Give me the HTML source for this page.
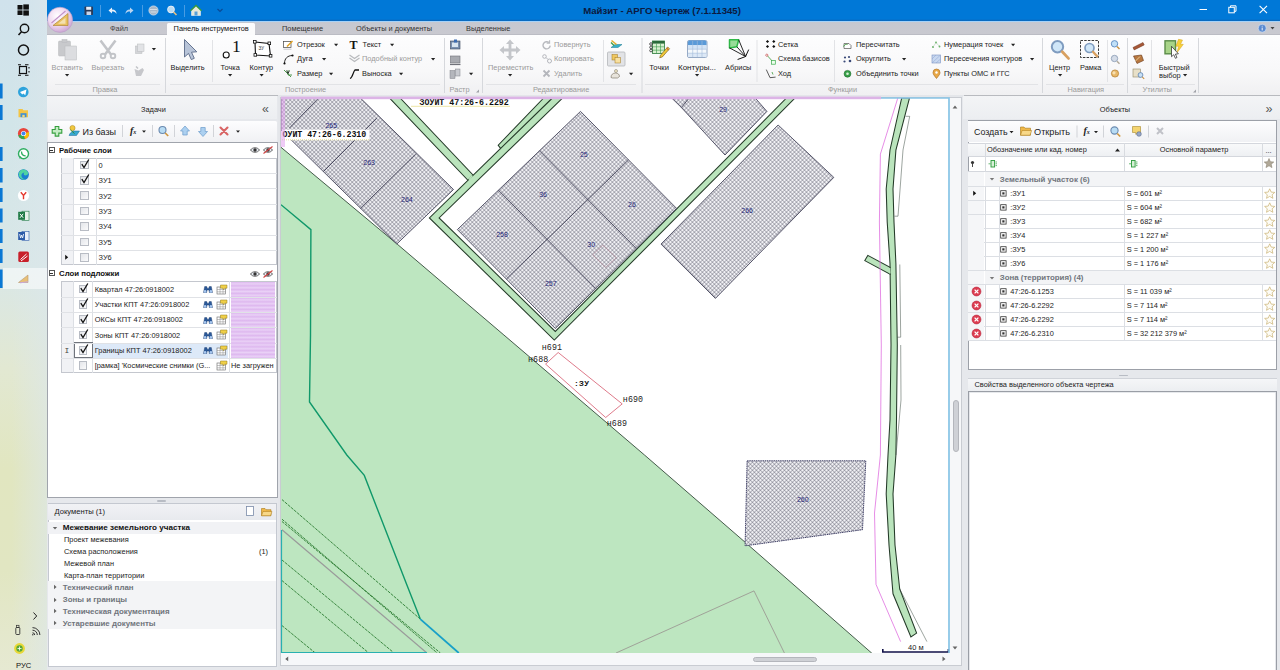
<!DOCTYPE html>
<html lang="ru"><head><meta charset="utf-8"><title>Майзит - АРГО Чертеж</title>
<style>
html,body{margin:0;padding:0}
body{width:1280px;height:670px;position:relative;overflow:hidden;background:#e9eaec;font-family:"Liberation Sans",sans-serif;font-size:7.4px;color:#222;line-height:1}
.a{position:absolute}
.t{position:absolute;white-space:nowrap;line-height:10px;height:10px;margin-top:-5px}
.b{font-weight:bold}
.g{color:#9a9a9a}
svg{position:absolute;overflow:visible}

</style></head>
<body>
<!-- TASKBAR -->
<div class="a" id="tb" style="left:0;top:0;width:47px;height:670px;background:linear-gradient(180deg,#d0e2ec 0%,#d2e5e9 18%,#d9e7e7 40%,#e2e8d2 55%,#e1e6c0 70%,#e1e6c2 85%,#e6e9d2 100%)"></div>
<div class="a" style="left:0;top:0;width:47px;height:670px;background:linear-gradient(90deg,rgba(222,232,236,0) 25%,rgba(220,231,236,0.600) 100%)"></div>
<div class="a" style="left:3px;top:268px;width:44px;height:21px;background:rgba(255,255,255,0.55)"></div>
<svg style="left:0;top:0" width="47" height="670">
<g fill="#0a78d4">
<rect x="0" y="83.5" width="2.6" height="15"/><rect x="0" y="105" width="2.6" height="15"/>
<rect x="0" y="147" width="2.6" height="14"/><rect x="0" y="168" width="2.6" height="14.5"/>
<rect x="0" y="188" width="2.6" height="14"/><rect x="0" y="208.5" width="2.6" height="14"/>
<rect x="0" y="229" width="2.6" height="14"/><rect x="0" y="249" width="2.6" height="14"/>
<rect x="0" y="269.5" width="2.6" height="18.5"/>
</g>
<!-- windows logo -->
<g fill="#111"><rect x="17.5" y="5" width="5" height="4.6"/><rect x="23.3" y="4.4" width="5.6" height="5.2"/><rect x="17.5" y="10.4" width="5" height="4.6"/><rect x="23.3" y="10.4" width="5.6" height="5.2"/></g>
<!-- search -->
<circle cx="24.5" cy="28.5" r="4.2" fill="none" stroke="#111" stroke-width="1.4"/><path d="M21.5,31.8L18.5,35" stroke="#111" stroke-width="1.6"/>
<!-- cortana -->
<circle cx="23.5" cy="50" r="5" fill="none" stroke="#111" stroke-width="1.5"/>
<!-- task view -->
<rect x="19.5" y="66.5" width="7" height="7" fill="none" stroke="#111" stroke-width="1.2"/><path d="M18,64.8h3M18,75.2h3M25,64.8h3.5M25,75.2h3.5M29,67v1.5M29,71v1.5" stroke="#111" stroke-width="1.1"/>
<!-- telegram -->
<circle cx="23.3" cy="92" r="5.3" fill="#2ea3dc"/><path d="M20,92l6.5,-2.6l-1.2,5.8l-2,-1.6l-1,1z" fill="#fff"/>
<!-- explorer -->
<path d="M18.5,109h4l1,1.2h4.5v7h-9.5z" fill="#f4c545"/><rect x="20.5" y="113.2" width="6" height="4" fill="#3d8fd6"/><rect x="22.3" y="114.8" width="2.4" height="2.4" fill="#f7d774"/>
<!-- chrome -->
<circle cx="23.5" cy="133.5" r="5.6" fill="#e8453c"/><path d="M23.5,133.5L18.2,135.5A5.6,5.6 0 0 0 25,138.9z" fill="#34a853"/><path d="M23.5,133.5L25,138.9A5.6,5.6 0 0 0 28.9,132z" fill="#fbbc05"/><circle cx="23.5" cy="133.5" r="2.6" fill="#fff"/><circle cx="23.5" cy="133.5" r="2" fill="#4285f4"/>
<!-- whatsapp -->
<circle cx="23.5" cy="153.8" r="5" fill="#fff" stroke="#2fae60" stroke-width="1.4"/><path d="M19.2,158.8l1,-2.8l1.6,1.4z" fill="#2fae60"/><path d="M21.5,151.5c0,2.5 1.8,4.3 4.2,4.3" fill="none" stroke="#2fae60" stroke-width="1.3"/>
<!-- edge -->
<circle cx="23.5" cy="174.6" r="5.4" fill="#1b7fd0"/><path d="M19,176a4.8,4.8 0 0 1 9,-3.4c0.6,1.6 -0.6,2.8 -2.4,2.8c-2.4,0 -2.2,-2.2 -1,-2.6c-2.6,-0.4 -4,2.2 -2.6,4.6c1,1.6 3,2.2 4.8,1.6a5.4,5.4 0 0 1 -7.8,-3z" fill="#4fd4a0"/>
<!-- yandex -->
<circle cx="23.5" cy="195.5" r="5.6" fill="#fff"/><path d="M20.8,192.2l2.7,3.3l2.7,-3.3M23.5,195.5v3.8" stroke="#e53a2e" stroke-width="1.4" fill="none"/>
<!-- excel -->
<rect x="22" y="211.2" width="7" height="9.2" fill="#e8f2ea" stroke="#1f7a45" stroke-width="0.6"/><rect x="18.2" y="211.8" width="6.8" height="8" fill="#1f7a45"/><path d="M20,213.8l3.2,4M23.2,213.8l-3.2,4" stroke="#fff" stroke-width="1"/>
<!-- word -->
<rect x="22" y="231.4" width="7" height="9.2" fill="#e8eef8" stroke="#2b5aa8" stroke-width="0.6"/><rect x="18.2" y="232" width="6.8" height="8" fill="#2b5aa8"/><path d="M19.6,234l1,4l1,-3l1,3l1,-4" stroke="#fff" stroke-width="0.8" fill="none"/>
<!-- red app -->
<rect x="18.3" y="251.5" width="10.6" height="10.6" rx="1.5" fill="#c8202a"/><path d="M20.5,259.5l6,-5.5M21,261l6.5,-5" stroke="#fff" stroke-width="1"/>
<!-- active app -->
<path d="M18.5,282.5l9.5,-7.5v7.5z" fill="#e8c078" stroke="#b89870" stroke-width="0.6"/><path d="M20,282.8l8,-1" stroke="#c8a8d8" stroke-width="1"/>
<!-- tray -->
<path d="M33.5,612.5l3.2,3.5l-3.2,3.5" fill="none" stroke="#222" stroke-width="1"/>
<rect x="15.8" y="627.5" width="4" height="7" rx="0.8" fill="none" stroke="#333" stroke-width="0.9"/><rect x="16.6" y="625.3" width="2.4" height="2.2" fill="none" stroke="#333" stroke-width="0.7"/>
<path d="M32.500,632.800a2.200,2.200 0 0 1 2.200,2.200M32.500,630.200a4.800,4.800 0 0 1 4.800,4.800M32.500,627.600a7.400,7.400 0 0 1 7.400,7.400" fill="none" stroke="#333" stroke-width="1"/><circle cx="32.800" cy="634.800" r="0.700" fill="#333"/>
<circle cx="19.500" cy="648.500" r="5.400" fill="#e8d838"/><circle cx="19.500" cy="648.500" r="3.200" fill="#58a838"/><path d="M17.5,648.5h4M19.5,646.5v4" stroke="#fff" stroke-width="0.8"/>
</svg>
<div class="t" style="left:16px;top:666px;font-size:7.6px;color:#111">РУС</div>

<!-- TITLE BAR -->
<div class="a" style="left:47px;top:0;width:1233px;height:20.700px;background:linear-gradient(180deg,#0078d7 0,#0078d7 18.900px,#0a69be 20.700px)"></div>
<div class="a" style="left:47px;top:20.700px;width:1233px;height:1.100px;background:#a6d2f8"></div>
<div class="t b" style="left:583px;top:10.5px;font-size:9.600px;color:#0c1a40;width:158px;text-align:center">Майзит - АРГО Чертеж (7.1.11345)</div>
<!-- TAB ROW -->
<div class="a" style="left:47px;top:21.800px;width:1233px;height:13.400px;background:linear-gradient(180deg,#c6c8d0 0,#c9c9d0 90%,#bbbcc4 96%)"></div>
<div class="a" style="left:167px;top:22.5px;width:88px;height:13.5px;background:#fbfbfc;border-radius:1.5px 1.5px 0 0"></div>
<div class="t" style="left:110px;top:29px;color:#444">Файл</div>
<div class="t" style="left:173.6px;top:29px;color:#111">Панель инструментов</div>
<div class="t" style="left:282px;top:29px;color:#333">Помещение</div>
<div class="t" style="left:356px;top:29px;color:#333">Объекты и документы</div>
<div class="t" style="left:466px;top:29px;color:#333">Выделенные</div>
<!-- RIBBON -->
<div class="a" style="left:47px;top:35.200px;width:1233px;height:59.800px;background:linear-gradient(180deg,#fdfdfe 0%,#f8f8f9 60%,#f0f0f2 100%)"></div>
<div class="a" style="left:47px;top:95px;width:1233px;height:1px;background:#b8babf"></div>
<div class="a" style="left:47px;top:96px;width:1233px;height:2px;background:#e6e8ec"></div>
<svg style="left:0;top:0" width="1280" height="100">
<g stroke="#d6d8dc" stroke-width="1"><path d="M165.5,38V93M444.5,38V93M482.5,38V93M642,38V93M1042.5,38V93M1127.5,38V93M1198.5,38V93"/></g>
<g stroke="#e2e3e6" stroke-width="1"><path d="M212.500,40V82M757,40V82M603.500,40V82M1151.500,40V82M834.500,40V82M1107.500,40V82M55,84.5H160M170,84.5H440M486,84.5H636M645,84.5H1038M1046,84.5H1124M1131,84.5H1195"/></g>
<!-- app orb -->
<defs><radialGradient id="orb" cx="40%" cy="35%" r="70%"><stop offset="0" stop-color="#ffffff"/><stop offset="0.55" stop-color="#f0d8f0"/><stop offset="1" stop-color="#c8a0d0"/></radialGradient></defs>
<circle cx="60" cy="19.8" r="12.6" fill="url(#orb)" stroke="#b8a0c8" stroke-width="0.6"/>
<path d="M53,25.5L68,13.500V25.500z" fill="#e8c060" stroke="#b08838" stroke-width="0.7"/><path d="M58,23.800l7.500,-6v6z" fill="#f4e0b0"/>
<path d="M51.500,23l14,-12" stroke="#c090c8" stroke-width="1.100"/>
<!-- quick access -->
<g>
<rect x="84.5" y="6.5" width="8.5" height="8.5" rx="0.8" fill="#2a3a58"/><rect x="86.2" y="6.8" width="5" height="3" fill="#e8eef8"/><rect x="86.5" y="11.5" width="4.6" height="3.5" fill="#c8d4e8"/>
<path d="M100.5,5V17M142.5,5V17M184.5,5V17" stroke="#5aa6e6" stroke-width="0.8"/>
<path d="M108.5,10.5l3.5,-3v2c3,0 4.5,1.5 4.5,4.5c-1,-2 -2.5,-2.5 -4.5,-2.5v2z" fill="#e8f0fa"/>
<path d="M133.5,10.5l-3.5,-3v2c-3,0 -4.5,1.5 -4.5,4.5c1,-2 2.5,-2.5 4.5,-2.5v2z" fill="#b8d4f0"/>
<circle cx="153.5" cy="10.5" r="4.6" fill="#a8b8c8" stroke="#dde6f0" stroke-width="0.7"/><path d="M150,9.5h7M150.5,12h6" stroke="#e8eef4" stroke-width="0.7"/>
<circle cx="171" cy="9.5" r="3.4" fill="#b8dcf4" stroke="#e8eef6" stroke-width="1"/><path d="M173.5,12l3,3" stroke="#e8c080" stroke-width="1.6"/>
<path d="M191.5,10.5l4.5,-4.5l4.5,4.5v5h-9z" fill="#e8e8d8" stroke="#fff" stroke-width="0.5"/><path d="M190.5,10.8l5.5,-5.3l5.5,5.3" fill="none" stroke="#3a9a3a" stroke-width="1.3"/><rect x="194.5" y="11.5" width="3" height="4" fill="#58a0d8"/>
<path d="M217.5,9l2.5,2.5l2.5,-2.5" fill="none" stroke="#0a4a96" stroke-width="1.2"/>
</g>
<!-- window controls -->
<path d="M1199.500,9.500h7.500" stroke="#fff" stroke-width="1"/>
<rect x="1228.800" y="7.300" width="5.500" height="5.500" fill="none" stroke="#fff" stroke-width="1"/><path d="M1230.500,7.300v-1.500h5.500v5.500h-1.600" fill="none" stroke="#fff" stroke-width="1"/>
<path d="M1259.600,5.800l7.400,7.400M1267,5.800l-7.400,7.400" stroke="#fff" stroke-width="1.100"/>
<circle cx="1262.200" cy="28.200" r="4" fill="#5a8ad0" stroke="#e8eef8" stroke-width="0.6"/><path d="M1262.200,27.600v2.800M1262.200,25.800v0.800" stroke="#fff" stroke-width="0.9"/><path d="M1270.500,27h4l-2,2.400z" fill="#444"/>
<!-- Правка -->
<g fill="#c8c9cc" stroke="#b8babd" stroke-width="0.5"><rect x="58.5" y="41" width="12" height="15" rx="1"/><rect x="62" y="39.5" width="5" height="3"/><rect x="65" y="46" width="11.5" height="14" fill="#dcdde0"/></g>
<g stroke="#c2c4c8" fill="none"><path d="M100.500,40.500l10.500,14M115.500,40.500l-10.500,14" stroke-width="2.600"/><circle cx="103" cy="56" r="2.300" stroke-width="1.900"/><circle cx="113" cy="56" r="2.300" stroke-width="1.900"/></g>
<g fill="#d4d5d8" stroke="#b8babd" stroke-width="0.5"><rect x="135.5" y="46" width="6.5" height="7.5"/><rect x="137.5" y="44" width="6.5" height="7.5" fill="#e2e3e6"/></g>
<path d="M134.5,69l4,1.5l4,-2.5l1.5,2l-3,6h-5z" fill="#c6c7cb"/><path d="M136,66.5l2,2" stroke="#c0c2c6" stroke-width="1.4"/>
<path d="M151.8,48h4.2l-2.1,2.4z" fill="#222"/>
<path d="M65,74h4.2l-2.1,2.4z" fill="#222"/>
<!-- Выделить cursor -->
<path d="M184.5,39.5v17.5l4,-3.6l2.8,6.2l3,-1.3l-2.8,-6.1l5.3,-0.4z" fill="#b8c4d8" stroke="#5a6a88" stroke-width="0.9"/>
<!-- Точка -->
<circle cx="226.200" cy="55" r="3" fill="#fff" stroke="#111" stroke-width="1.100"/>
<!-- Контур -->
<path d="M255,42l14,1.5l1.5,12.5l-15,-1z" fill="#fff" stroke="#111" stroke-width="1.1"/><g fill="#fff" stroke="#111" stroke-width="0.8"><rect x="253.5" y="40.5" width="2.6" height="2.6"/><rect x="268" y="42" width="2.6" height="2.6"/><rect x="269.3" y="54.5" width="2.6" height="2.6"/><rect x="254" y="53.6" width="2.6" height="2.6"/></g>
<path d="M228,74h4.2l-2.1,2.4zM259.5,74h4.2l-2.1,2.4z" fill="#222"/>
<!-- small icons Построение -->
<rect x="283.5" y="41.5" width="7.5" height="6" fill="#fff" stroke="#444" stroke-width="0.7"/><path d="M287,46.5l5.5,-5.5" stroke="#e0a020" stroke-width="1.5"/><path d="M283.5,49.2h8" stroke="#b0b0b8" stroke-width="0.7"/>
<path d="M284.5,63.5c0,-5 3,-8 8,-8" fill="none" stroke="#222" stroke-width="1"/><circle cx="284.5" cy="63.5" r="1.1" fill="#111"/><circle cx="292.5" cy="55.5" r="1.1" fill="#111"/>
<path d="M284,70l7,7M288,70v5h4" fill="none" stroke="#3a8a3a" stroke-width="0.9"/><path d="M286.5,70.5l1.5,3l1.5,-3" fill="none" stroke="#111" stroke-width="0.8"/>
<path d="M334,43.8h4.2l-2.1,2.4zM322,58h4.2l-2.1,2.4zM329,72.8h4.2l-2.1,2.4zM390,43.8h4.2l-2.1,2.4zM431,58h4.2l-2.1,2.4zM399,72.8h4.2l-2.1,2.4z" fill="#222"/>
<path d="M349.5,55l5,3.5l5,-3.5M349.5,58l5,3.5l5,-3.5" fill="none" stroke="#b8babd" stroke-width="1.2"/>
<path d="M350,78.5c3,-1 3,-7 5,-8.5h4" fill="none" stroke="#111" stroke-width="1.3"/>
<!-- Растр -->
<g><rect x="450.5" y="41" width="9.5" height="8" fill="#7a90b0" stroke="#38445a" stroke-width="0.6"/><rect x="452" y="42.5" width="6" height="4.5" fill="#d8e4f0"/><path d="M454,39.5h3v3h-3z" fill="#3a6ab0"/>
<rect x="450.500" y="56" width="9.5" height="7" fill="#a8aab0" stroke="#70727a" stroke-width="0.6"/><path d="M450,64.5h10.500" stroke="#70727a" stroke-width="1.2"/>
<rect x="450" y="70.500" width="5" height="8" fill="#b4b6bc" stroke="#80828a" stroke-width="0.5"/><rect x="455.500" y="69" width="4.500" height="7" fill="#c8cad0" stroke="#80828a" stroke-width="0.5"/></g>
<path d="M469,72.800h4.200l-2.100,2.400z" fill="#222"/>
<path d="M476,92.500h3v-3z" fill="#a0a2a8"/>
<!-- Редактирование -->
<g fill="#c4c6ca"><path d="M510,39.500l4,4.500h-2.600v4.600h4.600v-2.600l4.500,4l-4.500,4v-2.600h-4.600v4.600h2.600l-4,4.500l-4,-4.500h2.600v-4.600h-4.600v2.600l-4.500,-4l4.500,-4v2.600h4.600v-4.600h-2.600z"/></g>
<path d="M508,74h4.200l-2.100,2.400z" fill="#222"/>
<path d="M550.200,45.600a3.600,3.600 0 1 1 -1.200,-3" fill="none" stroke="#b8babf" stroke-width="1.400"/><path d="M549.600,40.200v2.900h-2.900" fill="none" stroke="#b8babf" stroke-width="1.100"/>
<g fill="none" stroke="#b4b6bc" stroke-width="1"><circle cx="544.500" cy="56.500" r="1.800"/><circle cx="549.500" cy="61" r="2"/><path d="M546,57.500l2,2"/></g>
<path d="M543.500,70.500l6,6M549.500,70.500l-6,6" stroke="#b4b6bc" stroke-width="1.800"/>
<path d="M611,47.500l4,-3h7l-4,3z" fill="#38b0c8" stroke="#187890" stroke-width="0.500"/><path d="M611.500,40.500l5,4" stroke="#e0b030" stroke-width="1.600"/><path d="M611,42.500l3,3" stroke="#3a9a48" stroke-width="1.200"/>
<rect x="607.500" y="52" width="17.500" height="14" rx="1" fill="#e2e3e6" stroke="#b4b6ba" stroke-width="0.800"/><rect x="612" y="54.500" width="5.500" height="5.500" fill="#f0c860" stroke="#a07820" stroke-width="0.500"/><rect x="615" y="57.500" width="5.500" height="5.500" fill="#f8e0a0" stroke="#a07820" stroke-width="0.500"/>
<path d="M611,77.500c0,-3 2,-4.500 4.500,-4.500s4,1.500 4,3.500l-2,1.500h-5z" fill="#e8e4dc" stroke="#706858" stroke-width="0.600"/><circle cx="616" cy="71" r="1.500" fill="#f0e8c8" stroke="#706858" stroke-width="0.500"/>
<path d="M629,72.800h4.200l-2.100,2.400z" fill="#222"/>
<!-- Функции big icons -->
<g><rect x="652.500" y="41" width="12" height="12.500" fill="#d8f0d0" stroke="#2a7a3a" stroke-width="0.800"/><rect x="652.500" y="41" width="12" height="2.600" fill="#2a6a3a"/><path d="M652.500,46.800h12M652.500,50.200h12M656.500,43.600v10M660.500,43.600v10" stroke="#3a9a4a" stroke-width="0.600"/>
<g fill="none" stroke="#333" stroke-width="0.800"><circle cx="651" cy="44" r="1.300"/><circle cx="651" cy="47.300" r="1.300"/><circle cx="651" cy="50.600" r="1.300"/></g>
<path d="M660.500,55.200l7.200,-8.200l1.900,1.700l-7.200,8.200l-2.700,0.900z" fill="#f0c838" stroke="#705818" stroke-width="0.600"/><path d="M666.600,48.200l1.900,1.700" stroke="#c03030" stroke-width="1"/></g>
<g><rect x="687.500" y="40.500" width="19.500" height="17" rx="1.500" fill="#f4f8fc" stroke="#8aa0c0" stroke-width="0.900"/><path d="M688,42a1.500,1.500 0 0 1 1.500,-1.500h15.500a1.500,1.500 0 0 1 1.500,1.500v3.200h-18.500z" fill="#5a9ad8"/><rect x="688" y="45.200" width="18.500" height="4" fill="#d4e4f6"/><rect x="688" y="53.200" width="18.500" height="3.800" fill="#dce8f6"/><path d="M688,49.200h18.500M688,53.200h18.500M692.700,41v16M697.300,41v16M702,41v16" stroke="#a4bcdc" stroke-width="0.600"/></g>
<g><path d="M729.500,39.800h9.200l-1.900,6.900l-7.300,1.200z" fill="#98dc98" stroke="#30b848" stroke-width="1.500" stroke-linejoin="round"/><path d="M738.700,39.800l6.900,16.700M736.800,46.700l8.800,9.800M729.500,47.900l16.100,8.600" stroke="#111" stroke-width="0.900" fill="none"/><path d="M748.700,49.600l-3.100,6.900l-8,3" stroke="#111" stroke-width="1" fill="none"/></g>
<path d="M695,74h4.200l-2.100,2.400z" fill="#222"/>
<!-- small: Сетка etc -->
<g fill="#111"><path d="M767.500,39.900l1.600,1.600l-1.600,1.600l-1.600,-1.600zM773.800,39.900l1.600,1.600l-1.600,1.600l-1.600,-1.600zM767.500,44.900l1.600,1.600l-1.600,1.600l-1.600,-1.600zM773.800,44.900l1.600,1.600l-1.600,1.600l-1.600,-1.600z"/></g>
<path d="M767,55.300l6,6.600" stroke="#3a9a3a" stroke-width="0.800"/><circle cx="766.800" cy="55.200" r="1.100" fill="#fff" stroke="#c03030" stroke-width="0.600"/><rect x="771.500" y="60.400" width="3.800" height="3.800" fill="#f0fff0" stroke="#3aaa4a" stroke-width="0.700"/>
<path d="M766.300,69.600l3.700,8.100l5.600,-0.600" fill="none" stroke="#333" stroke-width="0.800"/><path d="M772,72l1,2.500" stroke="#3a9a3a" stroke-width="0.8"/>
<path d="M844,48.500v-5h5l2,2v3z" fill="#fff" stroke="#555" stroke-width="0.700"/><path d="M843.500,46.500c1,-2 2.500,-2.500 4,-2" fill="none" stroke="#3a9a3a" stroke-width="0.9"/>
<g fill="#3a4a78"><circle cx="845" cy="57.500" r="1.100"/><circle cx="849" cy="57" r="1.100"/><circle cx="844.500" cy="61.500" r="1.100"/><circle cx="850" cy="61" r="1.300"/></g>
<circle cx="847.500" cy="73.800" r="3.400" fill="#38a048" stroke="#186828" stroke-width="0.600"/><circle cx="847.500" cy="73.800" r="1.300" fill="#d8f0d8"/>
<path d="M902,58h4.200l-2.100,2.400zM1011,43.800h4.200l-2.100,2.400zM1030,58h4.200l-2.100,2.400z" fill="#222"/>
<g fill="#58a858"><circle cx="933" cy="47" r="0.900"/><circle cx="936" cy="42.500" r="0.900"/><circle cx="939.500" cy="46.500" r="0.900"/></g><path d="M933,47l3,-4.500l3.500,4" fill="none" stroke="#a8c8a8" stroke-width="0.500"/>
<rect x="932" y="55" width="8.500" height="8" fill="#c8d8f0" stroke="#7890c0" stroke-width="0.600"/><path d="M932,63l8.500,-8M932,59l4,-4M936,63l4.500,-4" stroke="#8aa0d0" stroke-width="0.5"/>
<path d="M936.500,78.500c-2.500,-3 -3.500,-4.500 -3.500,-6a3.500,3.500 0 0 1 7,0c0,1.500 -1,3 -3.500,6z" fill="#e8a848" stroke="#a86818" stroke-width="0.600"/><circle cx="936.500" cy="72.500" r="1.200" fill="#fff"/>
<!-- Навигация -->
<circle cx="1057.500" cy="46.800" r="5.700" fill="#cfe6f8" stroke="#7f9cc0" stroke-width="2"/><path d="M1062.300,51.800l6.200,6.600" stroke="#d8a060" stroke-width="2.800" stroke-linecap="round"/>
<rect x="1080.500" y="40.500" width="18" height="17" fill="none" stroke="#222" stroke-width="0.900" stroke-dasharray="2.500 1.200"/><circle cx="1089.500" cy="48" r="4.500" fill="#cfe6f8" stroke="#7f9cc0" stroke-width="1.700"/><path d="M1093,51.800l4.200,4.600" stroke="#d8a060" stroke-width="2.300" stroke-linecap="round"/>
<path d="M1058,74h4.200l-2.100,2.400z" fill="#222"/>
<g><circle cx="1114.500" cy="43.800" r="3.200" fill="#c0e0f8" stroke="#5a88c0" stroke-width="0.900"/><path d="M1117,46.500l2.500,2.500" stroke="#c89040" stroke-width="1.400"/><circle cx="1114.500" cy="58.500" r="3.200" fill="#d4dce8" stroke="#90a0b8" stroke-width="0.900"/><path d="M1117,61.200l2.500,2.500" stroke="#b0a898" stroke-width="1.400"/>
<circle cx="1115" cy="73.500" r="3.600" fill="#e8b868" stroke="#b07828" stroke-width="0.700"/><circle cx="1114" cy="72.800" r="1.600" fill="#f8e0b0"/></g>
<!-- Утилиты -->
<path d="M1133,47.500l10,-5l1.200,2.400l-10,5z" fill="#a85838" stroke="#683018" stroke-width="0.500"/>
<path d="M1133.500,56l8,-1l2,5.500l-6.500,3z" fill="#b87840" stroke="#683818" stroke-width="0.600"/><path d="M1135.500,61l4.500,-4.500" stroke="#f0d8a0" stroke-width="0.9"/>
<rect x="1133" y="69" width="7.500" height="8" fill="#e8e0c8" stroke="#908868" stroke-width="0.600"/><circle cx="1140.500" cy="75" r="2.400" fill="#c8e0f4" stroke="#5a80b0" stroke-width="0.800"/><path d="M1142.200,76.800l2,2" stroke="#c89040" stroke-width="1.100"/>
<rect x="1165" y="40.800" width="10.500" height="13" fill="#a8d488" stroke="#5a8c48" stroke-width="1.400"/><path d="M1178.500,39.300l4,0.800l-2,4.200h2.800l-6.300,8.400l1.600,-6.400h-2.800z" fill="#f8d038" stroke="#d0a020" stroke-width="0.500"/><path d="M1171.500,46.300v10.400l2.300,-2l1.600,3.600l1.600,-0.800l-1.600,-3.400l3,-0.300z" fill="#fff" stroke="#222" stroke-width="0.700"/>
<path d="M1183,74h4.200l-2.100,2.400z" fill="#222"/>
<path d="M1193,92.500h3v-3z" fill="#a0a2a8"/>
</svg>
<!-- ribbon labels -->
<div class="t g" style="left:51.500px;top:67.500px">Вставить</div>
<div class="t g" style="left:91.500px;top:67.500px">Вырезать</div>
<div class="t" style="left:170.500px;top:67.500px">Выделить</div>
<div class="t" style="left:220.500px;top:67.500px">Точка</div>
<div class="t" style="left:249.500px;top:67.500px">Контур</div>
<div class="t" style="left:232px;top:45.800px;font-family:'Liberation Serif',serif;font-size:17.500px;color:#111;line-height:16px;height:16px;margin-top:-8px">1</div>
<div class="t" style="left:258.500px;top:48.500px;font-size:4.500px;color:#333">ЗУ</div>
<div class="t" style="left:297px;top:44.800px">Отрезок</div>
<div class="t" style="left:297px;top:59px">Дуга</div>
<div class="t" style="left:297px;top:73.800px">Размер</div>
<div class="t" style="left:349.500px;top:44.600px;font-family:'Liberation Serif',serif;font-weight:bold;font-size:12px;color:#111">T</div>
<div class="t" style="left:362.600px;top:44.800px">Текст</div>
<div class="t g" style="left:362px;top:59px">Подобный контур</div>
<div class="t" style="left:362px;top:73.800px">Выноска</div>
<div class="t g" style="left:488px;top:67.500px">Переместить</div>
<div class="t g" style="left:554px;top:44.800px">Повернуть</div>
<div class="t g" style="left:554px;top:59px">Копировать</div>
<div class="t g" style="left:554px;top:73.800px">Удалить</div>
<div class="t" style="left:649.300px;top:67.500px;font-size:7.600px">Точки</div>
<div class="t" style="left:678px;top:67.500px;font-size:8px">Контуры...</div>
<div class="t" style="left:725px;top:67.500px">Абрисы</div>
<div class="t" style="left:778px;top:44.800px">Сетка</div>
<div class="t" style="left:778px;top:59px">Схема базисов</div>
<div class="t" style="left:778px;top:73.800px">Ход</div>
<div class="t" style="left:856px;top:44.800px">Пересчитать</div>
<div class="t" style="left:856px;top:59px">Округлить</div>
<div class="t" style="left:856px;top:73.800px">Объединить точки</div>
<div class="t" style="left:944px;top:44.800px">Нумерация точек</div>
<div class="t" style="left:944px;top:59px">Пересечения контуров</div>
<div class="t" style="left:944px;top:73.800px">Пункты ОМС и ГГС</div>
<div class="t" style="left:1049px;top:67.500px">Центр</div>
<div class="t" style="left:1080px;top:67.500px">Рамка</div>
<div class="t" style="left:1158.800px;top:68px">Быстрый</div>
<div class="t" style="left:1159px;top:76.300px">выбор</div>
<div class="t g" style="left:92.500px;top:90px">Правка</div>
<div class="t g" style="left:285px;top:90px">Построение</div>
<div class="t g" style="left:449.600px;top:90px">Растр</div>
<div class="t g" style="left:533px;top:90px">Редактирование</div>
<div class="t g" style="left:828px;top:90px">Функции</div>
<div class="t g" style="left:1067.500px;top:90px">Навигация</div>
<div class="t g" style="left:1142.500px;top:90px">Утилиты</div>

<!-- LEFT PANEL -->
<div class="a" style="left:47px;top:96.5px;width:231px;height:573.5px;background:#e6e8ec"></div>
<div class="a" style="left:47px;top:96px;width:230px;height:23px;background:linear-gradient(180deg,#f3f4f6,#eceef1)"></div>
<div class="t" style="left:141px;top:109.5px;color:#222">Задачи</div>
<div class="t" style="left:262px;top:108.5px;color:#555;font-size:12.500px">«</div>
<div class="a" style="left:48px;top:121px;width:229px;height:20.5px;background:linear-gradient(180deg,#fdfdfe,#f0f1f4);border-radius:1.5px"></div>
<svg style="left:0;top:0" width="280" height="670">
<path d="M55.2,126.5h3.6v3h3v3.600h-3v3h-3.600v-3h-3v-3.600h3z" fill="#c4ecc4" stroke="#36a03e" stroke-width="1.100"/>
<circle cx="72.5" cy="128" r="2.600" fill="#f0c840" stroke="#a88018" stroke-width="0.500"/><path d="M70,133.500l3,-2.500h6.500l-3,4.500h-7.500z" fill="#38a8d0" stroke="#1a6a98" stroke-width="0.500"/><path d="M70.500,130l4,3.500" stroke="#2a8a3a" stroke-width="1"/>
<g stroke="#c8cacf" stroke-width="0.800"><path d="M122.500,125v12M152.500,125v12M174.500,125v12M213.500,125v12"/></g>
<path d="M142,130.500h4l-2,2.300zM236,130.500h4l-2,2.300z" fill="#222"/>
<circle cx="162.500" cy="130" r="3.500" fill="#b8dcf4" stroke="#6a8ab0" stroke-width="1.100"/><path d="M165.200,133l3,3" stroke="#d09840" stroke-width="1.700"/>
<path d="M185,126l4.500,5h-2.300v4h-4.400v-4h-2.300z" fill="#acd0f0" stroke="#6c9ccc" stroke-width="0.700"/>
<path d="M203,136.500l4.500,-5h-2.300v-4h-4.400v4h-2.300z" fill="#acd0f0" stroke="#6c9ccc" stroke-width="0.700"/>
<path d="M220.500,127.500l7,7M227.500,127.500l-7,7" stroke="#d86464" stroke-width="2.100" stroke-linecap="round"/>
</svg>
<div class="t" style="left:82.5px;top:131.5px;font-size:9px;color:#222">Из базы</div>
<div class="t" style="left:130px;top:130.5px;font-family:'Liberation Serif',serif;font-style:italic;font-weight:bold;font-size:10px;color:#222">f<span style="font-size:6px">x</span></div>
<div class="a" style="left:47px;top:142px;width:230.500px;height:356px;background:#fff;border:1.100px solid #a0a4ac;box-sizing:border-box"></div>
<div class="a" style="left:48.5px;top:146.7px;width:6px;height:6px;border:0.8px solid #555;box-sizing:border-box;background:#fff"></div><div class="a" style="left:49.800px;top:149.5px;width:3.400px;height:0.900px;background:#333"></div>
<div class="t b" style="left:59px;top:150.5px;font-size:7.700px;color:#111">Рабочие слои</div>
<svg style="left:249px;top:145px" width="28" height="10"><path d="M1.500,5c2,-3 7,-3 9,0c-2,3 -7,3 -9,0z" fill="#e8ecf2" stroke="#444" stroke-width="0.800"/><circle cx="6" cy="5" r="1.700" fill="#333"/><path d="M14.500,5c2,-3 7,-3 9,0c-2,3 -7,3 -9,0z" fill="#e8ecf2" stroke="#444" stroke-width="0.800"/><circle cx="19" cy="5" r="1.700" fill="#333"/><path d="M14.500,8.500l9,-7" stroke="#d04040" stroke-width="1.100"/></svg>
<div class="a" style="left:61px;top:157.5px;width:215.5px;height:107.8px;border:0.8px solid #c4c7ce;box-sizing:border-box;background:#fff"></div>
<div class="a" style="left:61.800px;top:158.3px;width:11px;height:106.2px;background:#f1f2f5"></div>
<div class="a" style="left:72.800px;top:157.5px;width:0.800px;height:107.8px;background:#dcdfe4"></div>
<div class="a" style="left:95.500px;top:157.5px;width:0.800px;height:107.8px;background:#dcdfe4"></div>
<div class="a" style="left:80px;top:160.59999999999997px;width:8.600px;height:8.600px;border:0.9px solid #b8bcc4;box-sizing:border-box;background:linear-gradient(135deg,#e4e6ea,#fafafb)"></div><svg style="left:80px;top:157.89999999999998px" width="11" height="12"><path d="M1.800,6.200l2.200,3.300l4.800,-8" fill="none" stroke="#111" stroke-width="1.300"/></svg>
<div class="t" style="left:98.500px;top:165.5px;color:#222">0</div>
<div class="a" style="left:61px;top:172.9px;width:215.500px;height:0.800px;background:#e0e2e6"></div>
<div class="a" style="left:80px;top:175.99999999999997px;width:8.600px;height:8.600px;border:0.9px solid #b8bcc4;box-sizing:border-box;background:linear-gradient(135deg,#e4e6ea,#fafafb)"></div><svg style="left:80px;top:173.29999999999998px" width="11" height="12"><path d="M1.800,6.200l2.200,3.300l4.800,-8" fill="none" stroke="#111" stroke-width="1.300"/></svg>
<div class="t" style="left:98.500px;top:180.5px;color:#222">ЗУ1</div>
<div class="a" style="left:61px;top:188.3px;width:215.500px;height:0.800px;background:#e0e2e6"></div>
<div class="a" style="left:80px;top:191.39999999999998px;width:8.600px;height:8.600px;border:0.9px solid #b8bcc4;box-sizing:border-box;background:linear-gradient(135deg,#e4e6ea,#fafafb)"></div>
<div class="t" style="left:98.500px;top:196.5px;color:#222">ЗУ2</div>
<div class="a" style="left:61px;top:203.7px;width:215.500px;height:0.800px;background:#e0e2e6"></div>
<div class="a" style="left:80px;top:206.79999999999995px;width:8.600px;height:8.600px;border:0.9px solid #b8bcc4;box-sizing:border-box;background:linear-gradient(135deg,#e4e6ea,#fafafb)"></div>
<div class="t" style="left:98.500px;top:211.5px;color:#222">ЗУ3</div>
<div class="a" style="left:61px;top:219.1px;width:215.500px;height:0.800px;background:#e0e2e6"></div>
<div class="a" style="left:80px;top:222.19999999999996px;width:8.600px;height:8.600px;border:0.9px solid #b8bcc4;box-sizing:border-box;background:linear-gradient(135deg,#e4e6ea,#fafafb)"></div>
<div class="t" style="left:98.500px;top:226.5px;color:#222">ЗУ4</div>
<div class="a" style="left:61px;top:234.5px;width:215.500px;height:0.800px;background:#e0e2e6"></div>
<div class="a" style="left:80px;top:237.59999999999997px;width:8.600px;height:8.600px;border:0.9px solid #b8bcc4;box-sizing:border-box;background:linear-gradient(135deg,#e4e6ea,#fafafb)"></div>
<div class="t" style="left:98.500px;top:242.5px;color:#222">ЗУ5</div>
<div class="a" style="left:61px;top:249.9px;width:215.500px;height:0.800px;background:#e0e2e6"></div>
<div class="a" style="left:80px;top:253.0px;width:8.600px;height:8.600px;border:0.9px solid #b8bcc4;box-sizing:border-box;background:linear-gradient(135deg,#e4e6ea,#fafafb)"></div>
<div class="t" style="left:98.500px;top:257.5px;color:#222">ЗУ6</div>
<svg style="left:64px;top:254.3px" width="6" height="7"><path d="M1.200,0.800l3,2.500l-3,2.500z" fill="#111"/></svg>
<div class="a" style="left:48.5px;top:270.2px;width:6px;height:6px;border:0.8px solid #555;box-sizing:border-box;background:#fff"></div><div class="a" style="left:49.800px;top:273.0px;width:3.400px;height:0.900px;background:#333"></div>
<div class="t b" style="left:59px;top:273.5px;font-size:7.800px;color:#111">Слои подложки</div>
<svg style="left:249px;top:268.5px" width="28" height="10"><path d="M1.500,5c2,-3 7,-3 9,0c-2,3 -7,3 -9,0z" fill="#e8ecf2" stroke="#444" stroke-width="0.800"/><circle cx="6" cy="5" r="1.700" fill="#333"/><path d="M14.500,5c2,-3 7,-3 9,0c-2,3 -7,3 -9,0z" fill="#e8ecf2" stroke="#444" stroke-width="0.800"/><circle cx="19" cy="5" r="1.700" fill="#333"/><path d="M14.500,8.500l9,-7" stroke="#d04040" stroke-width="1.100"/></svg>
<div class="a" style="left:61px;top:281.4px;width:215.500px;height:91.80000000000001px;border:0.800px solid #c4c7ce;box-sizing:border-box;background:#fff"></div>
<div class="a" style="left:61.800px;top:282.2px;width:11px;height:90.2px;background:#f1f2f5"></div>
<div class="a" style="left:72.8px;top:281.4px;width:0.800px;height:91.8px;background:#dcdfe4"></div>
<div class="a" style="left:92.3px;top:281.4px;width:0.800px;height:91.8px;background:#dcdfe4"></div>
<div class="a" style="left:228.5px;top:281.4px;width:0.800px;height:91.8px;background:#dcdfe4"></div>
<div class="a" style="left:78.5px;top:284.74999999999994px;width:8.600px;height:8.600px;border:0.9px solid #b8bcc4;box-sizing:border-box;background:linear-gradient(135deg,#e4e6ea,#fafafb)"></div><svg style="left:78.5px;top:282.04999999999995px" width="11" height="12"><path d="M1.800,6.200l2.200,3.300l4.800,-8" fill="none" stroke="#111" stroke-width="1.300"/></svg>
<div class="t" style="left:94.700px;top:289.5px;color:#222">Квартал 47:26:0918002</div>
<svg style="left:202px;top:284.0px" width="12" height="10"><path d="M1.500,8.500l1.200,-6h2l0.800,2h1l0.800,-2h2l1.200,6h-3.200l-0.300,-2.500h-2l-0.300,2.500z" fill="#2a5898" stroke="#183868" stroke-width="0.400"/><circle cx="3.100" cy="7.400" r="1.300" fill="#a8c8f0"/><circle cx="8.900" cy="7.400" r="1.300" fill="#a8c8f0"/></svg>
<div class="a" style="left:231px;top:282.2px;width:43.500px;height:14.5px;background:repeating-linear-gradient(180deg,#deb8ef 0,#e9d0f6 1.900px,#deb8ef 3.800px)"></div>
<svg style="left:215.500px;top:283.5px" width="12" height="11"><rect x="1" y="3" width="8.500" height="7" fill="#fff" stroke="#666" stroke-width="0.600"/><path d="M1,5.500h8.500M1,7.800h8.500M4,3v7M7,3v7" stroke="#888" stroke-width="0.500"/><path d="M4.500,1h6.500v3.200h-2.500l-1,1.500l-0.500,-1.500h-2.500z" fill="#f0d048" stroke="#907818" stroke-width="0.500"/></svg>
<div class="a" style="left:61px;top:296.7px;width:215.500px;height:0.800px;background:#e0e2e6"></div>
<div class="a" style="left:78.5px;top:300.04999999999995px;width:8.600px;height:8.600px;border:0.9px solid #b8bcc4;box-sizing:border-box;background:linear-gradient(135deg,#e4e6ea,#fafafb)"></div><svg style="left:78.5px;top:297.34999999999997px" width="11" height="12"><path d="M1.800,6.200l2.200,3.300l4.800,-8" fill="none" stroke="#111" stroke-width="1.300"/></svg>
<div class="t" style="left:94.700px;top:304.5px;color:#222">Участки КПТ 47:26:0918002</div>
<svg style="left:202px;top:299.3px" width="12" height="10"><path d="M1.500,8.500l1.200,-6h2l0.800,2h1l0.800,-2h2l1.200,6h-3.200l-0.300,-2.500h-2l-0.300,2.500z" fill="#2a5898" stroke="#183868" stroke-width="0.400"/><circle cx="3.100" cy="7.400" r="1.300" fill="#a8c8f0"/><circle cx="8.900" cy="7.400" r="1.300" fill="#a8c8f0"/></svg>
<div class="a" style="left:231px;top:297.5px;width:43.500px;height:14.5px;background:repeating-linear-gradient(180deg,#deb8ef 0,#e9d0f6 1.900px,#deb8ef 3.800px)"></div>
<svg style="left:215.500px;top:298.8px" width="12" height="11"><rect x="1" y="3" width="8.500" height="7" fill="#fff" stroke="#666" stroke-width="0.600"/><path d="M1,5.500h8.500M1,7.800h8.500M4,3v7M7,3v7" stroke="#888" stroke-width="0.500"/><path d="M4.500,1h6.500v3.200h-2.500l-1,1.500l-0.500,-1.500h-2.500z" fill="#f0d048" stroke="#907818" stroke-width="0.500"/></svg>
<div class="a" style="left:61px;top:312.0px;width:215.500px;height:0.800px;background:#e0e2e6"></div>
<div class="a" style="left:78.5px;top:315.34999999999997px;width:8.600px;height:8.600px;border:0.9px solid #b8bcc4;box-sizing:border-box;background:linear-gradient(135deg,#e4e6ea,#fafafb)"></div><svg style="left:78.5px;top:312.65px" width="11" height="12"><path d="M1.800,6.200l2.200,3.300l4.800,-8" fill="none" stroke="#111" stroke-width="1.300"/></svg>
<div class="t" style="left:94.700px;top:319.5px;color:#222">ОКСы КПТ 47:26:0918002</div>
<svg style="left:202px;top:314.6px" width="12" height="10"><path d="M1.500,8.500l1.200,-6h2l0.800,2h1l0.800,-2h2l1.200,6h-3.200l-0.300,-2.500h-2l-0.300,2.500z" fill="#2a5898" stroke="#183868" stroke-width="0.400"/><circle cx="3.100" cy="7.400" r="1.300" fill="#a8c8f0"/><circle cx="8.900" cy="7.400" r="1.300" fill="#a8c8f0"/></svg>
<div class="a" style="left:231px;top:312.8px;width:43.500px;height:14.5px;background:repeating-linear-gradient(180deg,#deb8ef 0,#e9d0f6 1.900px,#deb8ef 3.800px)"></div>
<svg style="left:215.500px;top:314.1px" width="12" height="11"><rect x="1" y="3" width="8.500" height="7" fill="#fff" stroke="#666" stroke-width="0.600"/><path d="M1,5.500h8.500M1,7.800h8.500M4,3v7M7,3v7" stroke="#888" stroke-width="0.500"/><path d="M4.500,1h6.500v3.200h-2.500l-1,1.500l-0.500,-1.500h-2.500z" fill="#f0d048" stroke="#907818" stroke-width="0.500"/></svg>
<div class="a" style="left:61px;top:327.3px;width:215.500px;height:0.800px;background:#e0e2e6"></div>
<div class="a" style="left:78.5px;top:330.6499999999999px;width:8.600px;height:8.600px;border:0.9px solid #b8bcc4;box-sizing:border-box;background:linear-gradient(135deg,#e4e6ea,#fafafb)"></div><svg style="left:78.5px;top:327.94999999999993px" width="11" height="12"><path d="M1.800,6.200l2.200,3.300l4.800,-8" fill="none" stroke="#111" stroke-width="1.300"/></svg>
<div class="t" style="left:94.700px;top:335.5px;color:#222">Зоны КПТ 47:26:0918002</div>
<svg style="left:202px;top:329.9px" width="12" height="10"><path d="M1.500,8.500l1.200,-6h2l0.800,2h1l0.800,-2h2l1.200,6h-3.200l-0.300,-2.500h-2l-0.300,2.500z" fill="#2a5898" stroke="#183868" stroke-width="0.400"/><circle cx="3.100" cy="7.400" r="1.300" fill="#a8c8f0"/><circle cx="8.900" cy="7.400" r="1.300" fill="#a8c8f0"/></svg>
<div class="a" style="left:231px;top:328.1px;width:43.500px;height:14.5px;background:repeating-linear-gradient(180deg,#deb8ef 0,#e9d0f6 1.900px,#deb8ef 3.800px)"></div>
<svg style="left:215.500px;top:329.4px" width="12" height="11"><rect x="1" y="3" width="8.500" height="7" fill="#fff" stroke="#666" stroke-width="0.600"/><path d="M1,5.500h8.500M1,7.800h8.500M4,3v7M7,3v7" stroke="#888" stroke-width="0.500"/><path d="M4.500,1h6.500v3.200h-2.500l-1,1.500l-0.500,-1.500h-2.500z" fill="#f0d048" stroke="#907818" stroke-width="0.500"/></svg>
<div class="a" style="left:93.100px;top:343.4px;width:135.400px;height:14.5px;background:#dde9f8"></div>
<div class="a" style="left:73.600px;top:342.4px;width:19px;height:16.1px;border:0.800px solid #70747c;box-sizing:border-box"></div>
<div class="t" style="left:64.500px;top:350.5px;font-family:'Liberation Mono',monospace;font-size:8px;color:#444">I</div>
<div class="a" style="left:61px;top:342.6px;width:215.500px;height:0.800px;background:#e0e2e6"></div>
<div class="a" style="left:78.5px;top:345.94999999999993px;width:8.600px;height:8.600px;border:0.9px solid #b8bcc4;box-sizing:border-box;background:linear-gradient(135deg,#e4e6ea,#fafafb)"></div><svg style="left:78.5px;top:343.24999999999994px" width="11" height="12"><path d="M1.800,6.200l2.200,3.300l4.800,-8" fill="none" stroke="#111" stroke-width="1.300"/></svg>
<div class="t" style="left:94.700px;top:350.5px;color:#222">Границы КПТ 47:26:0918002</div>
<svg style="left:202px;top:345.2px" width="12" height="10"><path d="M1.500,8.500l1.200,-6h2l0.800,2h1l0.800,-2h2l1.200,6h-3.200l-0.300,-2.500h-2l-0.300,2.500z" fill="#2a5898" stroke="#183868" stroke-width="0.400"/><circle cx="3.100" cy="7.400" r="1.300" fill="#a8c8f0"/><circle cx="8.900" cy="7.400" r="1.300" fill="#a8c8f0"/></svg>
<div class="a" style="left:231px;top:343.4px;width:43.500px;height:14.5px;background:repeating-linear-gradient(180deg,#deb8ef 0,#e9d0f6 1.900px,#deb8ef 3.800px)"></div>
<svg style="left:215.500px;top:344.7px" width="12" height="11"><rect x="1" y="3" width="8.500" height="7" fill="#fff" stroke="#666" stroke-width="0.600"/><path d="M1,5.500h8.500M1,7.800h8.500M4,3v7M7,3v7" stroke="#888" stroke-width="0.500"/><path d="M4.500,1h6.500v3.200h-2.500l-1,1.500l-0.500,-1.500h-2.500z" fill="#f0d048" stroke="#907818" stroke-width="0.500"/></svg>
<div class="a" style="left:61px;top:357.9px;width:215.500px;height:0.800px;background:#e0e2e6"></div>
<div class="a" style="left:78.5px;top:361.24999999999994px;width:8.600px;height:8.600px;border:0.9px solid #b8bcc4;box-sizing:border-box;background:linear-gradient(135deg,#e4e6ea,#fafafb)"></div>
<div class="t" style="left:94.700px;top:365.5px;color:#222">[рамка] 'Космические снимки (G...</div>
<svg style="left:215.500px;top:360.0px" width="12" height="11"><rect x="1" y="3" width="8.500" height="7" fill="#fff" stroke="#666" stroke-width="0.600"/><path d="M1,5.500h8.500M1,7.800h8.500M4,3v7M7,3v7" stroke="#888" stroke-width="0.500"/><path d="M4.500,1h6.500v3.200h-2.500l-1,1.500l-0.500,-1.500h-2.500z" fill="#f0d048" stroke="#907818" stroke-width="0.500"/></svg>
<div class="t" style="left:231px;top:365.5px;color:#222">Не загружен</div>
<div class="a" style="left:157px;top:500px;width:9px;height:1.500px;background:#b8bcc4;border-radius:1px"></div>
<div class="a" style="left:47.500px;top:503px;width:229.500px;height:164px;background:#fff;border:0.800px solid #c4c8d0;box-sizing:border-box"></div>
<div class="a" style="left:48.300px;top:503.800px;width:228px;height:16.500px;background:linear-gradient(180deg,#f1f2f5,#e8eaee)"></div>
<div class="t" style="left:54.500px;top:511.5px;color:#222;font-size:7.600px">Документы (1)</div>
<svg style="left:244px;top:505px" width="32" height="13"><rect x="2.500" y="1.500" width="7" height="9" fill="#fff" stroke="#7a8aa8" stroke-width="0.800"/><path d="M17.500,3.500h3.500l1,1.200h5v6h-9.500z" fill="#f0b848" stroke="#a87818" stroke-width="0.600"/><path d="M17.500,10.700l1.500,-4.200h9l-1.500,4.200z" fill="#f8d888" stroke="#a87818" stroke-width="0.500"/></svg>
<div class="a" style="left:48.300px;top:521.500px;width:228px;height:12px;background:#f1f2f5"></div>
<div class="a" style="left:48.300px;top:581.400px;width:228px;height:48px;background:#f3f4f6"></div>
<div class="t b" style="left:62.800px;top:527.5px;font-size:8.100px;color:#111">Межевание земельного участка</div>
<svg style="left:52px;top:525.7px" width="7" height="5"><path d="M0.800,1h4.400l-2.200,2.600z" fill="#666"/></svg>
<div class="t" style="left:64px;top:539.5px;color:#222">Проект межевания</div>
<div class="t" style="left:64px;top:551.5px;color:#222">Схема расположения</div>
<div class="t" style="left:64px;top:563.5px;color:#222">Межевой план</div>
<div class="t" style="left:64px;top:575.5px;color:#222">Карта-план территории</div>
<div class="t b" style="left:62.800px;top:587.5px;font-size:7.900px;color:#70747c">Технический план</div>
<svg style="left:52.500px;top:584.4px" width="5" height="7"><path d="M1,0.800l2.600,2.200l-2.600,2.200z" fill="#666"/></svg>
<div class="t b" style="left:62.800px;top:599.5px;font-size:7.900px;color:#70747c">Зоны и границы</div>
<svg style="left:52.500px;top:596.6px" width="5" height="7"><path d="M1,0.800l2.600,2.200l-2.600,2.200z" fill="#666"/></svg>
<div class="t b" style="left:62.800px;top:611.5px;font-size:7.900px;color:#70747c">Техническая документация</div>
<svg style="left:52.500px;top:608.3px" width="5" height="7"><path d="M1,0.800l2.600,2.200l-2.600,2.200z" fill="#666"/></svg>
<div class="t b" style="left:62.800px;top:623.5px;font-size:7.900px;color:#70747c">Устаревшие документы</div>
<svg style="left:52.500px;top:620.4px" width="5" height="7"><path d="M1,0.800l2.600,2.200l-2.600,2.200z" fill="#666"/></svg>
<div class="t" style="left:259px;top:551.5px;color:#222">(1)</div>

<!-- MAP -->
<div class="a" style="left:278px;top:95px;width:686px;height:575px;background:#e4e6ea"></div>
<div class="a" style="left:280px;top:97px;width:682px;height:569px;background:#f4f5f7;border:1px solid #c9ccd2;box-sizing:border-box"></div>
<svg id="map" style="left:281px;top:98px" width="669" height="555" viewBox="281 98 669 555">
<defs>
<pattern id="h" width="2.83" height="2.83" patternUnits="userSpaceOnUse" patternTransform="rotate(45)">
<rect width="2.83" height="2.83" fill="#f2f2f6"/>
<path d="M0 1.415H2.83M1.415 0V2.83" stroke="#5c5c6c" stroke-width="0.420"/>
</pattern>
<clipPath id="mc"><rect x="281" y="98" width="669" height="555"/></clipPath>
</defs>
<rect x="281" y="98" width="669" height="555" fill="#ffffff"/>
<g clip-path="url(#mc)">
<!-- big green zone -->
<polygon points="275,142.300 281,147.300 397.200,244.100 503.900,335 644.500,455 746,543 871.600,653 879.600,660 275,660" fill="#bde6c0" stroke="#2a4030" stroke-width="0.850"/>
<!-- parcel block A -->
<polygon points="281,98 360.4,98 453.5,189.5 396.8,244 281,129.8" fill="url(#h)" stroke="#303048" stroke-width="0.8"/>
<path d="M376.9,118.2L323.5,171.5M415.7,154.1L360.4,208.4M318.7,98L289.6,127.9" stroke="#303048" stroke-width="0.8" fill="none"/>
<!-- roads -->
<g fill="#bae4bc" stroke="#243a28" stroke-width="1.050" stroke-linejoin="miter">
<polygon points="389.5,98 400.1,98 473,174.9 468.2,180.5"/>
<polygon points="543.7,98 552.4,98 501.2,149.1 498.2,145.2"/>
<polygon points="552.4,98 562.6,98 439.1,217.9 555.3,331.4 786.5,98 795,98 554.3,340.1 429.4,217.9"/>
</g>
<path d="M469,179.8L472.4,175.6" stroke="#bae4bc" stroke-width="1.6"/>
<!-- parcel block B -->
<polygon points="580.5,111.4 676.6,208.4 555.3,328.5 457.4,229.6" fill="url(#h)" stroke="#303048" stroke-width="0.8"/>
<path d="M506.4,279L628.5,159.9M498.4,190.2L595.7,288.5M539.5,150.8L636.2,248.4" stroke="#303048" stroke-width="0.8" fill="none"/>
<polygon points="602.8,245.1 616.4,257.7 605.7,267.4 592.7,254.8" fill="none" stroke="#b08898" stroke-width="0.7"/>
<!-- block 29 -->
<polygon points="671.7,98 681.4,107.5 725,155 766.9,111.4 755.2,98" fill="url(#h)" stroke="#303048" stroke-width="0.8"/>
<path d="M681.4,107.5L689.2,98" stroke="#303048" stroke-width="0.8"/>
<!-- block 266 -->
<polygon points="778.1,125 833.8,177.4 715.4,298.4 661,244.1" fill="url(#h)" stroke="#303048" stroke-width="0.8"/>
<!-- block 260 -->
<polygon points="747.1,460.8 865.8,460.8 862.5,529.7 745.1,545.8" fill="url(#h)" stroke="#30305a" stroke-width="0.9" stroke-dasharray="1.5 0.7"/>
<!-- vertical road -->
<polygon points="901.7,98 890,150 886.2,189 887.2,222 890,263.5 891,345 890,420 888,455 886.2,494 889,545 893,593.8 910.9,636.9 916.6,633.1 899.7,589 895,545 893,494 895.9,455 896.5,420 897.3,345 895.9,263.5 894,222 893,189 895.9,150.2 909.5,98" fill="#bae4bc" stroke="#243a28" stroke-width="1.050"/>
<polygon points="867.8,255.4 864.8,260.6 890,274.2 890,267.4" fill="#bae4bc" stroke="#243a28" stroke-width="1.050"/>
<path d="M889.6,268L889.8,273.5" stroke="#bae4bc" stroke-width="1.6"/>
<path d="M905.6,116.3H909.7L903,150 900,190 898,216.2H894.5M899.8,264.5L900.7,337.2H897.3M899.7,589L926.9,641.6M896,455L901,400 900.7,345" stroke="#3a4a40" stroke-width="0.5" fill="none"/>
<!-- pink line -->
<polyline points="897.8,98 880.4,154.1 879.4,222 881.3,345 880.4,455 874.5,513 876,584.4 900.6,641.6" fill="none" stroke="#e070e0" stroke-width="0.8"/>
<!-- outline in green -->
<polyline points="616,653 754,590.9 784.4,653" fill="none" stroke="#98908e" stroke-width="0.8"/>
<!-- dashed lines -->
<g stroke="#2a7a30" stroke-width="0.900" stroke-dasharray="3 1" fill="none">
<path d="M282,499.6L420.3,619.1"/>
<path d="M282,519.2L437.2,653M282,521.5L440.4,653"/>
<path d="M282,560L394.1,653"/>
<path d="M282,580.6L368.8,653"/>
<path d="M282,625.6L315.3,653"/>
</g>
<path d="M282,529.7L426.9,653" stroke="#9a9a9a" stroke-width="1.2"/>
<!-- teal line -->
<polyline points="281,204.7 310.9,229.6 310.5,335 309.5,402 346.8,455 364.3,475.4 406.9,585 420.3,619.1" fill="none" stroke="#10986a" stroke-width="1.400"/>
<path d="M420.3,619.1L458.8,653" stroke="#18a0c8" stroke-width="1.800"/>
<!-- red parcel -->
<polygon points="558.2,352.5 545.6,364.1 605.7,417.5 622.2,403.9" fill="#ffffff" stroke="#d04058" stroke-width="0.7"/>
</g>
<!-- labels -->
<rect x="411" y="98" width="99" height="8" fill="#fff"/>
<path d="M411,106.3H510" stroke="#e8e090" stroke-width="0.8"/>
<rect x="282" y="129.6" width="87.5" height="10.6" fill="#fff"/>
<path d="M282,139.8H369" stroke="#d8d060" stroke-width="0.7" stroke-dasharray="1 1"/>
<g font-family="'Liberation Mono',monospace" font-size="8.3" font-weight="bold" fill="#111">
<text x="419.5" y="104.6" textLength="89.3">ЗОУИТ 47:26-6.2292</text>
<text x="282.6" y="136.6" textLength="83.6">ОУИТ 47:26-6.2310</text>
<text x="574" y="386" textLength="15" font-size="8">:ЗУ</text>
</g>
<g font-family="'Liberation Mono',monospace" font-size="8.3" fill="#222">
<text x="541.7" y="349.6" textLength="20.3">н691</text>
<text x="528" y="362" textLength="20.3">н688</text>
<text x="622.8" y="402" textLength="20.3">н690</text>
<text x="606.7" y="426" textLength="20.3">н689</text>
</g>
<g font-family="'Liberation Sans',sans-serif" font-size="7" fill="#26267a" text-anchor="middle">
<text x="331.3" y="127.8">265</text><text x="369.1" y="165.2">263</text><text x="406.9" y="201.5">264</text>
<text x="583.8" y="157.1">25</text><text x="543.1" y="197.2">36</text><text x="631.9" y="206.5">26</text>
<text x="723.1" y="112.4">29</text><text x="502" y="237.4">258</text><text x="591.2" y="246.5">30</text>
<text x="550.8" y="286.3">257</text><text x="747.1" y="213.3">266</text><text x="802.8" y="501.6">260</text>
</g>
<!-- scale bar -->
<path d="M882.8,649V652H948.4V649" stroke="#101048" stroke-width="1.6" fill="none"/>
<text x="908" y="650" font-family="'Liberation Sans',sans-serif" font-size="7.5" fill="#222">40 м</text>
<!-- frame -->
<rect x="281" y="98" width="4" height="49" fill="rgba(226,160,238,0.550)"/>
<rect x="281" y="96.600" width="600" height="2.600" fill="#dcb4e6"/>
<path d="M881,98H949V653" stroke="#86c4e6" stroke-width="1.700" fill="none"/>
<path d="M281.5,530V652.6H427" stroke="#28b0b0" stroke-width="1.2" fill="none"/>
</svg>
<!-- scrollbars -->
<div class="a" style="left:950px;top:98px;width:11px;height:555px;background:#f6f7f9"></div>
<div class="a" style="left:281px;top:653px;width:680px;height:12px;background:#f6f7f9"></div>
<div class="a" style="left:753px;top:656.5px;width:64px;height:5.5px;border-radius:3px;background:#cfd1d6;border:0.5px solid #b4b6bc;box-sizing:border-box"></div>
<div class="a" style="left:953px;top:400px;width:5.5px;height:52px;border-radius:3px;background:#cfd1d6;border:0.5px solid #b4b6bc;box-sizing:border-box"></div>
<svg style="left:0;top:0" width="1280" height="670"><g fill="#666"><path d="M952.6,108.5h4.8l-2.4,-3zM952.6,646.5h4.8l-2.4,3zM288.2,656.5v4.8l-3,-2.4zM942.5,656.5v4.8l3,-2.4z"/></g></svg>

<!-- RIGHT PANEL -->
<div class="a" style="left:962px;top:96.500px;width:318px;height:573.500px;background:#e6e8ec"></div>
<div class="a" style="left:963px;top:96px;width:317px;height:23px;background:linear-gradient(180deg,#f3f4f6,#eceef1)"></div>
<div class="t" style="left:1099.700px;top:109.5px;color:#222">Объекты</div>
<div class="t" style="left:1265.500px;top:108.5px;color:#555;font-size:12.500px">»</div>
<div class="a" style="left:967.500px;top:120.400px;width:309.500px;height:250px;background:#fff;border:1.100px solid #9ca0a8;box-sizing:border-box"></div>
<div class="a" style="left:968.400px;top:121.300px;width:307.700px;height:21px;background:linear-gradient(180deg,#fdfdfe,#f0f1f4)"></div>
<div class="t" style="left:974px;top:131.5px;font-size:8.900px;color:#222">Создать</div>
<div class="t" style="left:1034px;top:131.5px;font-size:9.200px;color:#222">Открыть</div>
<div class="t" style="left:1083.500px;top:130.5px;font-family:'Liberation Serif',serif;font-style:italic;font-weight:bold;font-size:10px;color:#222">f<span style="font-size:6px">x</span></div>
<svg style="left:960px;top:118px" width="320" height="30">
<path d="M49.500,13h4l-2,2.300zM134,13h4l-2,2.300z" fill="#222"/>
<path d="M60.500,9h3.500l1,1.200h5.500v7h-10z" fill="#f0b848" stroke="#a87818" stroke-width="0.600"/><path d="M60.500,17.200l1.600,-4.700h9.600l-1.600,4.700z" fill="#f8d888" stroke="#a87818" stroke-width="0.500"/>
<g stroke="#c8cacf" stroke-width="0.800"><path d="M117,7.500v12M143.500,7.500v12M188.500,7.500v12"/></g>
<circle cx="154.500" cy="12.500" r="3.600" fill="#b8dcf4" stroke="#6a8ab0" stroke-width="1.100"/><path d="M157.200,15.500l3,3" stroke="#d09840" stroke-width="1.700"/>
<path d="M172.500,8.500h8v6h-3l-1.500,2l-0.500,-2h-3z" fill="#f4d470" stroke="#a88828" stroke-width="0.600"/><circle cx="179" cy="16" r="2.300" fill="#98a8c8" stroke="#58688a" stroke-width="0.600"/>
<path d="M197,10l6,6M203,10l-6,6" stroke="#c0c2c8" stroke-width="2"/>
</svg>
<div class="a" style="left:968.400px;top:143px;width:307.700px;height:13.800px;background:linear-gradient(180deg,#f8f9fa,#eef0f3);border-top:0.800px solid #d4d7dd;border-bottom:0.800px solid #d4d7dd;box-sizing:border-box"></div>
<div class="t" style="left:987px;top:149.5px;color:#222">Обозначение или кад. номер</div>
<div class="t" style="left:1159.700px;top:149.5px;color:#222">Основной параметр</div>
<div class="t" style="left:1265.500px;top:150.5px;color:#222">...</div>
<svg style="left:1114px;top:147px" width="8" height="6"><path d="M1,4.500h5l-2.500,-3z" fill="#222"/></svg>
<div class="a" style="left:968.400px;top:170.800px;width:307.700px;height:0.800px;background:#d4d7dd"></div>
<svg style="left:966px;top:157px" width="314" height="14"><circle cx="6.500" cy="5.500" r="1.600" fill="#333"/><path d="M6.500,6.500v3.500" stroke="#333" stroke-width="0.900"/>
<g><rect x="25" y="3.500" width="3.600" height="6.500" fill="#d8f0d8" stroke="#2a9a3a" stroke-width="0.900"/><path d="M22.500,6.800h2M29.500,5h1.500M29.500,6.800h1.500M29.500,8.600h1.500" stroke="#2a9a3a" stroke-width="0.700"/></g>
<g transform="translate(140.500,0)"><rect x="25" y="3.500" width="3.600" height="6.500" fill="#d8f0d8" stroke="#2a9a3a" stroke-width="0.900"/><path d="M22.500,6.800h2M29.500,5h1.500M29.500,6.800h1.500M29.500,8.600h1.500" stroke="#2a9a3a" stroke-width="0.700"/></g>
<path d="M303,1.500l1.400,3.200l3.400,0.300l-2.600,2.200l0.800,3.400l-3,-1.800l-3,1.800l0.800,-3.400l-2.600,-2.200l3.400,-0.300z" fill="#b0a898" stroke="#807868" stroke-width="0.500"/></svg>
<div class="a" style="left:984.5px;top:143px;width:0.800px;height:197px;background:#d8dbe0"></div>
<div class="a" style="left:1124px;top:143px;width:0.800px;height:28px;background:#d8dbe0"></div>
<div class="a" style="left:1262px;top:143px;width:0.800px;height:28px;background:#d8dbe0"></div>
<div class="a" style="left:985.300px;top:171.6px;width:290.800px;height:15.1px;background:#f3f4f6"></div>
<div class="a" style="left:968.400px;top:171.6px;width:16px;height:15.1px;background:#f5f6f8"></div>
<div class="t b" style="left:999.700px;top:179.5px;font-size:7.900px;color:#70747c">Земельный участок (6)</div>
<svg style="left:988.500px;top:177.3px" width="7" height="5"><path d="M0.800,1h4.400l-2.200,2.600z" fill="#777"/></svg>
<div class="a" style="left:968.400px;top:186.7px;width:16px;height:13.9px;background:#f5f6f8"></div>
<div class="a" style="left:968.400px;top:200.2px;width:307.700px;height:0.800px;background:#dcdfe4"></div>
<div class="a" style="left:998.600px;top:186.7px;width:0.800px;height:13.9px;background:#dcdfe4"></div>
<div class="a" style="left:1124px;top:186.7px;width:0.800px;height:13.9px;background:#dcdfe4"></div>
<div class="a" style="left:1262px;top:186.7px;width:0.800px;height:13.9px;background:#dcdfe4"></div>
<svg style="left:1000px;top:190.1px" width="7" height="7"><rect x="0.700" y="0.700" width="5.400" height="5.400" fill="#fff" stroke="#333" stroke-width="0.800"/><rect x="2.300" y="2.300" width="2.200" height="2.200" fill="#333"/></svg>
<div class="t" style="left:1010.200px;top:193.5px;color:#222">:ЗУ1</div>
<div class="t" style="left:1126.700px;top:193.5px;color:#222">S = 601 м²</div>
<svg style="left:1263.500px;top:187.8px" width="12" height="12"><path d="M5.700,0.800l1.500,3.300l3.600,0.300l-2.700,2.400l0.800,3.500l-3.200,-1.900l-3.200,1.900l0.800,-3.500l-2.700,-2.400l3.600,-0.300z" fill="#fdfcf6" stroke="#c8b070" stroke-width="0.700"/></svg>
<svg style="left:972px;top:190.4px" width="6" height="7"><path d="M1.200,0.800l3,2.500l-3,2.500z" fill="#111"/></svg>
<div class="a" style="left:968.400px;top:200.6px;width:16px;height:13.9px;background:#f5f6f8"></div>
<div class="a" style="left:968.400px;top:214.1px;width:307.700px;height:0.800px;background:#dcdfe4"></div>
<div class="a" style="left:998.600px;top:200.6px;width:0.800px;height:13.9px;background:#dcdfe4"></div>
<div class="a" style="left:1124px;top:200.6px;width:0.800px;height:13.9px;background:#dcdfe4"></div>
<div class="a" style="left:1262px;top:200.6px;width:0.800px;height:13.9px;background:#dcdfe4"></div>
<svg style="left:1000px;top:204.1px" width="7" height="7"><rect x="0.700" y="0.700" width="5.400" height="5.400" fill="#fff" stroke="#333" stroke-width="0.800"/><rect x="2.300" y="2.300" width="2.200" height="2.200" fill="#333"/></svg>
<div class="t" style="left:1010.200px;top:207.5px;color:#222">:ЗУ2</div>
<div class="t" style="left:1126.700px;top:207.5px;color:#222">S = 604 м²</div>
<svg style="left:1263.500px;top:201.8px" width="12" height="12"><path d="M5.700,0.800l1.500,3.300l3.600,0.300l-2.700,2.400l0.800,3.500l-3.200,-1.900l-3.200,1.900l0.800,-3.500l-2.700,-2.400l3.600,-0.300z" fill="#fdfcf6" stroke="#c8b070" stroke-width="0.700"/></svg>
<div class="a" style="left:968.400px;top:214.5px;width:16px;height:13.8px;background:#f5f6f8"></div>
<div class="a" style="left:968.400px;top:227.9px;width:307.700px;height:0.800px;background:#dcdfe4"></div>
<div class="a" style="left:998.600px;top:214.5px;width:0.800px;height:13.8px;background:#dcdfe4"></div>
<div class="a" style="left:1124px;top:214.5px;width:0.800px;height:13.8px;background:#dcdfe4"></div>
<div class="a" style="left:1262px;top:214.5px;width:0.800px;height:13.8px;background:#dcdfe4"></div>
<svg style="left:1000px;top:217.9px" width="7" height="7"><rect x="0.700" y="0.700" width="5.400" height="5.400" fill="#fff" stroke="#333" stroke-width="0.800"/><rect x="2.300" y="2.300" width="2.200" height="2.200" fill="#333"/></svg>
<div class="t" style="left:1010.200px;top:221.5px;color:#222">:ЗУ3</div>
<div class="t" style="left:1126.700px;top:221.5px;color:#222">S = 682 м²</div>
<svg style="left:1263.500px;top:215.6px" width="12" height="12"><path d="M5.700,0.800l1.500,3.300l3.600,0.300l-2.700,2.400l0.800,3.500l-3.200,-1.900l-3.200,1.900l0.800,-3.500l-2.700,-2.400l3.600,-0.300z" fill="#fdfcf6" stroke="#c8b070" stroke-width="0.700"/></svg>
<div class="a" style="left:968.400px;top:228.3px;width:16px;height:13.7px;background:#f5f6f8"></div>
<div class="a" style="left:968.400px;top:241.6px;width:307.700px;height:0.800px;background:#dcdfe4"></div>
<div class="a" style="left:998.600px;top:228.3px;width:0.800px;height:13.7px;background:#dcdfe4"></div>
<div class="a" style="left:1124px;top:228.3px;width:0.800px;height:13.7px;background:#dcdfe4"></div>
<div class="a" style="left:1262px;top:228.3px;width:0.800px;height:13.7px;background:#dcdfe4"></div>
<svg style="left:1000px;top:231.7px" width="7" height="7"><rect x="0.700" y="0.700" width="5.400" height="5.400" fill="#fff" stroke="#333" stroke-width="0.800"/><rect x="2.300" y="2.300" width="2.200" height="2.200" fill="#333"/></svg>
<div class="t" style="left:1010.200px;top:235.5px;color:#222">:ЗУ4</div>
<div class="t" style="left:1126.700px;top:235.5px;color:#222">S = 1 227 м²</div>
<svg style="left:1263.500px;top:229.3px" width="12" height="12"><path d="M5.700,0.800l1.500,3.300l3.600,0.300l-2.700,2.400l0.800,3.500l-3.200,-1.900l-3.200,1.900l0.800,-3.500l-2.700,-2.400l3.600,-0.300z" fill="#fdfcf6" stroke="#c8b070" stroke-width="0.700"/></svg>
<div class="a" style="left:968.400px;top:242px;width:16px;height:14.4px;background:#f5f6f8"></div>
<div class="a" style="left:968.400px;top:256.0px;width:307.700px;height:0.800px;background:#dcdfe4"></div>
<div class="a" style="left:998.600px;top:242px;width:0.800px;height:14.4px;background:#dcdfe4"></div>
<div class="a" style="left:1124px;top:242px;width:0.800px;height:14.4px;background:#dcdfe4"></div>
<div class="a" style="left:1262px;top:242px;width:0.800px;height:14.4px;background:#dcdfe4"></div>
<svg style="left:1000px;top:245.7px" width="7" height="7"><rect x="0.700" y="0.700" width="5.400" height="5.400" fill="#fff" stroke="#333" stroke-width="0.800"/><rect x="2.300" y="2.300" width="2.200" height="2.200" fill="#333"/></svg>
<div class="t" style="left:1010.200px;top:249.5px;color:#222">:ЗУ5</div>
<div class="t" style="left:1126.700px;top:249.5px;color:#222">S = 1 200 м²</div>
<svg style="left:1263.500px;top:243.4px" width="12" height="12"><path d="M5.700,0.800l1.500,3.300l3.600,0.300l-2.700,2.400l0.800,3.500l-3.200,-1.900l-3.200,1.900l0.800,-3.500l-2.700,-2.400l3.600,-0.300z" fill="#fdfcf6" stroke="#c8b070" stroke-width="0.700"/></svg>
<div class="a" style="left:968.400px;top:256.4px;width:16px;height:13.8px;background:#f5f6f8"></div>
<div class="a" style="left:968.400px;top:269.8px;width:307.700px;height:0.800px;background:#dcdfe4"></div>
<div class="a" style="left:998.600px;top:256.4px;width:0.800px;height:13.8px;background:#dcdfe4"></div>
<div class="a" style="left:1124px;top:256.4px;width:0.800px;height:13.8px;background:#dcdfe4"></div>
<div class="a" style="left:1262px;top:256.4px;width:0.800px;height:13.8px;background:#dcdfe4"></div>
<svg style="left:1000px;top:259.8px" width="7" height="7"><rect x="0.700" y="0.700" width="5.400" height="5.400" fill="#fff" stroke="#333" stroke-width="0.800"/><rect x="2.300" y="2.300" width="2.200" height="2.200" fill="#333"/></svg>
<div class="t" style="left:1010.200px;top:263.5px;color:#222">:ЗУ6</div>
<div class="t" style="left:1126.700px;top:263.5px;color:#222">S = 1 176 м²</div>
<svg style="left:1263.500px;top:257.5px" width="12" height="12"><path d="M5.700,0.800l1.500,3.300l3.600,0.300l-2.700,2.400l0.800,3.500l-3.200,-1.900l-3.200,1.900l0.800,-3.500l-2.700,-2.400l3.600,-0.300z" fill="#fdfcf6" stroke="#c8b070" stroke-width="0.700"/></svg>
<div class="a" style="left:985.300px;top:270.2px;width:290.800px;height:14.4px;background:#f3f4f6"></div>
<div class="a" style="left:968.400px;top:270.2px;width:16px;height:14.4px;background:#f5f6f8"></div>
<div class="t b" style="left:999.700px;top:277.5px;font-size:7.900px;color:#70747c">Зона (территория) (4)</div>
<svg style="left:988.500px;top:275.6px" width="7" height="5"><path d="M0.800,1h4.400l-2.200,2.600z" fill="#777"/></svg>
<div class="a" style="left:968.400px;top:284.6px;width:16px;height:13.8px;background:#f5f6f8"></div>
<div class="a" style="left:968.400px;top:298.0px;width:307.700px;height:0.800px;background:#dcdfe4"></div>
<div class="a" style="left:998.600px;top:284.6px;width:0.800px;height:13.8px;background:#dcdfe4"></div>
<div class="a" style="left:1124px;top:284.6px;width:0.800px;height:13.8px;background:#dcdfe4"></div>
<div class="a" style="left:1262px;top:284.6px;width:0.800px;height:13.8px;background:#dcdfe4"></div>
<svg style="left:1000px;top:288.0px" width="7" height="7"><rect x="0.700" y="0.700" width="5.400" height="5.400" fill="#fff" stroke="#333" stroke-width="0.800"/><rect x="2.300" y="2.300" width="2.200" height="2.200" fill="#333"/></svg>
<div class="t" style="left:1010.200px;top:291.5px;color:#222">47:26-6.1253</div>
<div class="t" style="left:1126.700px;top:291.5px;color:#222">S = 11 039 м²</div>
<svg style="left:1263.500px;top:285.7px" width="12" height="12"><path d="M5.700,0.800l1.500,3.300l3.600,0.300l-2.700,2.400l0.800,3.500l-3.200,-1.900l-3.200,1.900l0.800,-3.500l-2.700,-2.400l3.600,-0.300z" fill="#fdfcf6" stroke="#c8b070" stroke-width="0.700"/></svg>
<svg style="left:971px;top:286.0px" width="11" height="11"><circle cx="5.500" cy="5.500" r="4.500" fill="#dc3c50" stroke="#b02038" stroke-width="0.500"/><path d="M3.600,3.600l3.800,3.800M7.400,3.600l-3.800,3.800" stroke="#fff" stroke-width="1.300"/></svg>
<div class="a" style="left:968.400px;top:298.4px;width:16px;height:14.1px;background:#f5f6f8"></div>
<div class="a" style="left:968.400px;top:312.1px;width:307.700px;height:0.800px;background:#dcdfe4"></div>
<div class="a" style="left:998.600px;top:298.4px;width:0.800px;height:14.1px;background:#dcdfe4"></div>
<div class="a" style="left:1124px;top:298.4px;width:0.800px;height:14.1px;background:#dcdfe4"></div>
<div class="a" style="left:1262px;top:298.4px;width:0.800px;height:14.1px;background:#dcdfe4"></div>
<svg style="left:1000px;top:301.9px" width="7" height="7"><rect x="0.700" y="0.700" width="5.400" height="5.400" fill="#fff" stroke="#333" stroke-width="0.800"/><rect x="2.300" y="2.300" width="2.200" height="2.200" fill="#333"/></svg>
<div class="t" style="left:1010.200px;top:305.5px;color:#222">47:26-6.2292</div>
<div class="t" style="left:1126.700px;top:305.5px;color:#222">S = 7 114 м²</div>
<svg style="left:1263.500px;top:299.6px" width="12" height="12"><path d="M5.700,0.800l1.500,3.300l3.600,0.300l-2.700,2.400l0.800,3.500l-3.200,-1.900l-3.200,1.900l0.800,-3.500l-2.700,-2.400l3.600,-0.300z" fill="#fdfcf6" stroke="#c8b070" stroke-width="0.700"/></svg>
<svg style="left:971px;top:299.9px" width="11" height="11"><circle cx="5.500" cy="5.500" r="4.500" fill="#dc3c50" stroke="#b02038" stroke-width="0.500"/><path d="M3.600,3.600l3.800,3.800M7.400,3.600l-3.800,3.800" stroke="#fff" stroke-width="1.300"/></svg>
<div class="a" style="left:968.400px;top:312.5px;width:16px;height:13.8px;background:#f5f6f8"></div>
<div class="a" style="left:968.400px;top:325.9px;width:307.700px;height:0.800px;background:#dcdfe4"></div>
<div class="a" style="left:998.600px;top:312.5px;width:0.800px;height:13.8px;background:#dcdfe4"></div>
<div class="a" style="left:1124px;top:312.5px;width:0.800px;height:13.8px;background:#dcdfe4"></div>
<div class="a" style="left:1262px;top:312.5px;width:0.800px;height:13.8px;background:#dcdfe4"></div>
<svg style="left:1000px;top:315.9px" width="7" height="7"><rect x="0.700" y="0.700" width="5.400" height="5.400" fill="#fff" stroke="#333" stroke-width="0.800"/><rect x="2.300" y="2.300" width="2.200" height="2.200" fill="#333"/></svg>
<div class="t" style="left:1010.200px;top:319.5px;color:#222">47:26-6.2292</div>
<div class="t" style="left:1126.700px;top:319.5px;color:#222">S = 7 114 м²</div>
<svg style="left:1263.500px;top:313.6px" width="12" height="12"><path d="M5.700,0.800l1.500,3.300l3.600,0.300l-2.700,2.400l0.800,3.500l-3.200,-1.900l-3.200,1.900l0.800,-3.500l-2.700,-2.400l3.600,-0.300z" fill="#fdfcf6" stroke="#c8b070" stroke-width="0.700"/></svg>
<svg style="left:971px;top:313.9px" width="11" height="11"><circle cx="5.500" cy="5.500" r="4.500" fill="#dc3c50" stroke="#b02038" stroke-width="0.500"/><path d="M3.600,3.600l3.800,3.800M7.400,3.600l-3.800,3.800" stroke="#fff" stroke-width="1.300"/></svg>
<div class="a" style="left:968.400px;top:326.3px;width:16px;height:13.7px;background:#f5f6f8"></div>
<div class="a" style="left:968.400px;top:339.6px;width:307.700px;height:0.800px;background:#dcdfe4"></div>
<div class="a" style="left:998.600px;top:326.3px;width:0.800px;height:13.7px;background:#dcdfe4"></div>
<div class="a" style="left:1124px;top:326.3px;width:0.800px;height:13.7px;background:#dcdfe4"></div>
<div class="a" style="left:1262px;top:326.3px;width:0.800px;height:13.7px;background:#dcdfe4"></div>
<svg style="left:1000px;top:329.6px" width="7" height="7"><rect x="0.700" y="0.700" width="5.400" height="5.400" fill="#fff" stroke="#333" stroke-width="0.800"/><rect x="2.300" y="2.300" width="2.200" height="2.200" fill="#333"/></svg>
<div class="t" style="left:1010.200px;top:333.5px;color:#222">47:26-6.2310</div>
<div class="t" style="left:1126.700px;top:333.5px;color:#222">S = 32 212 379 м²</div>
<svg style="left:1263.500px;top:327.3px" width="12" height="12"><path d="M5.700,0.800l1.500,3.300l3.600,0.300l-2.700,2.400l0.800,3.500l-3.200,-1.900l-3.200,1.900l0.800,-3.500l-2.700,-2.400l3.600,-0.300z" fill="#fdfcf6" stroke="#c8b070" stroke-width="0.700"/></svg>
<svg style="left:971px;top:327.6px" width="11" height="11"><circle cx="5.500" cy="5.500" r="4.500" fill="#dc3c50" stroke="#b02038" stroke-width="0.500"/><path d="M3.600,3.600l3.800,3.800M7.400,3.600l-3.800,3.800" stroke="#fff" stroke-width="1.300"/></svg>
<div class="a" style="left:968.400px;top:186.300px;width:307.700px;height:0.800px;background:#dcdfe4"></div>
<div class="a" style="left:968.400px;top:284.200px;width:307.700px;height:0.800px;background:#dcdfe4"></div>
<div class="a" style="left:968.400px;top:269.800px;width:307.700px;height:0.800px;background:#dcdfe4"></div>
<div class="a" style="left:1119px;top:374.500px;width:9px;height:1.500px;background:#b8bcc4;border-radius:1px"></div>
<div class="a" style="left:967.500px;top:378px;width:309.500px;height:12.800px;background:linear-gradient(180deg,#f5f6f8,#eceef1);border-top:0.800px solid #d0d3d9;box-sizing:border-box"></div>
<div class="t" style="left:974.500px;top:384.5px;color:#222">Свойства выделенного объекта чертежа</div>
<div class="a" style="left:967.500px;top:390.800px;width:309.500px;height:282px;background:#fff;border:1.400px solid #9a9ea6;box-sizing:border-box;box-shadow:inset 0 0 0 0.800px #e0e2e6"></div>

</body></html>
